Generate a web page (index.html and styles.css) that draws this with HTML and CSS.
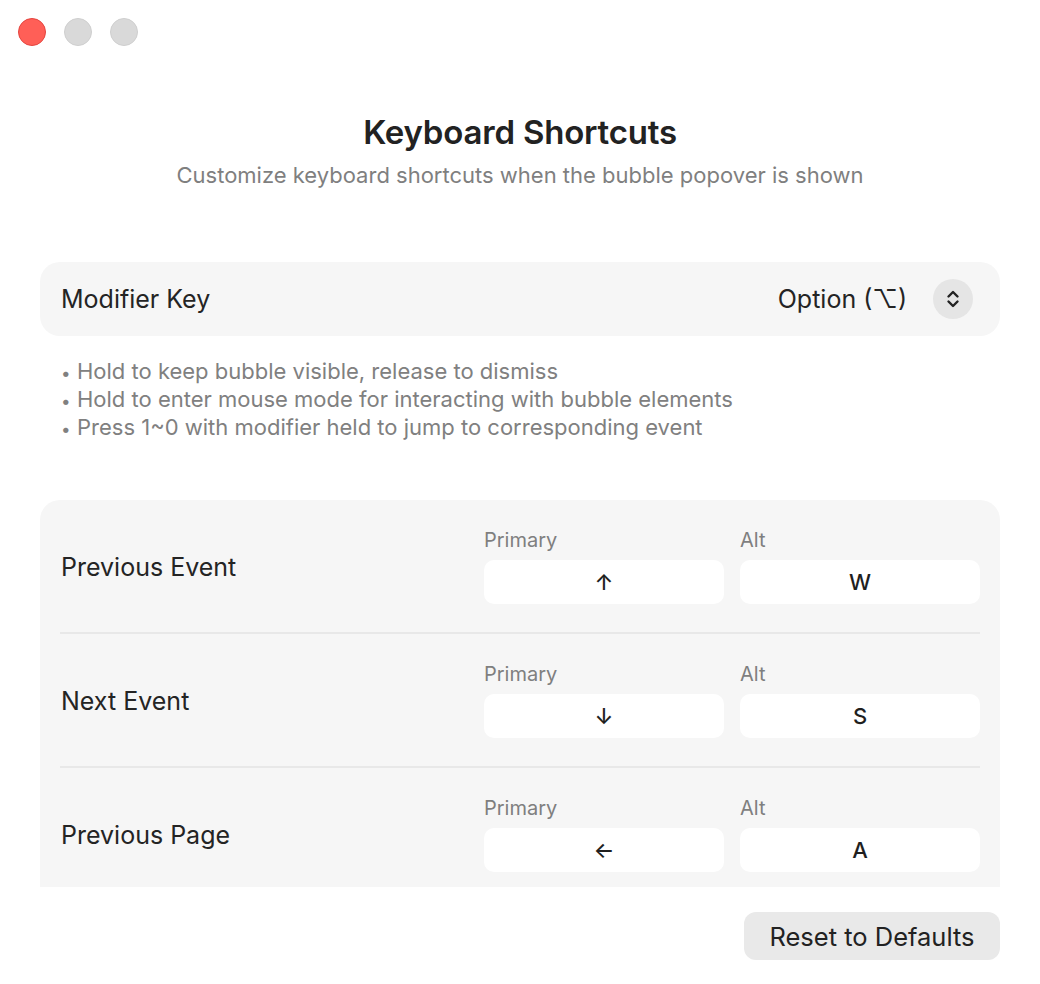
FILE: index.html
```html
<!DOCTYPE html>
<html lang="en">
<head>
<meta charset="utf-8">
<title>Keyboard Shortcuts</title>
<link rel="stylesheet" href="styles.css">
</head>
<body>
<div class="window">
  <div class="titlebar">
    <span class="light light-close"></span>
    <span class="light light-off"></span>
    <span class="light light-off"></span>
  </div>

  <header class="header">
    <h1 class="title">Keyboard Shortcuts</h1>
    <p class="subtitle">Customize keyboard shortcuts when the bubble popover is shown</p>
  </header>

  <section class="card modifier">
    <span class="row-label">Modifier Key</span>
    <div class="picker">
      <span class="picker-value">Option (⌥)</span>
      <span class="stepper">
        <svg width="14" height="20" viewBox="0 0 14 20" aria-hidden="true">
          <path d="M2.5 7.5 L7 3 L11.5 7.5" fill="none" stroke="#222" stroke-width="2.4" stroke-linecap="round" stroke-linejoin="round"/>
          <path d="M2.5 12.5 L7 17 L11.5 12.5" fill="none" stroke="#222" stroke-width="2.4" stroke-linecap="round" stroke-linejoin="round"/>
        </svg>
      </span>
    </div>
  </section>

  <ul class="notes">
    <li>Hold to keep bubble visible, release to dismiss</li>
    <li>Hold to enter mouse mode for interacting with bubble elements</li>
    <li>Press 1~0 with modifier held to jump to corresponding event</li>
  </ul>

  <section class="shortcuts">
    <div class="shortcut">
      <span class="row-label">Previous Event</span>
      <div class="bindings">
        <div class="binding"><span class="binding-label">Primary</span><span class="key">↑</span></div>
        <div class="binding"><span class="binding-label">Alt</span><span class="key">W</span></div>
      </div>
    </div>
    <div class="shortcut">
      <span class="row-label">Next Event</span>
      <div class="bindings">
        <div class="binding"><span class="binding-label">Primary</span><span class="key">↓</span></div>
        <div class="binding"><span class="binding-label">Alt</span><span class="key">S</span></div>
      </div>
    </div>
    <div class="shortcut">
      <span class="row-label">Previous Page</span>
      <div class="bindings">
        <div class="binding"><span class="binding-label">Primary</span><span class="key">←</span></div>
        <div class="binding"><span class="binding-label">Alt</span><span class="key">A</span></div>
      </div>
    </div>
  </section>

  <footer class="footer">
    <button class="reset" type="button">Reset to Defaults</button>
  </footer>
</div>
</body>
</html>
```

FILE: styles.css
```css
* {
  box-sizing: border-box;
}

html, body {
  margin: 0;
  padding: 0;
  background: #ffffff;
}

body {
  font-family: Inter, "Noto Sans", "DejaVu Sans", sans-serif;
  color: #242424;
  width: 1040px;
  height: 984px;
  overflow: hidden;
}

.window {
  display: flex;
  flex-direction: column;
  padding: 0 40px;
}

/* window controls */
.titlebar {
  display: flex;
  gap: 18px;
  padding-top: 18px;
  margin-left: -22px;
  height: 46px;
}

.light {
  width: 28px;
  height: 28px;
  border-radius: 50%;
  display: block;
}

.light-close {
  background: #ff5f57;
  border: 1px solid #e5453f;
}

.light-off {
  background: #d9d9d9;
  border: 1px solid #cfcfcf;
}

/* heading */
.header {
  text-align: center;
  margin-top: 66px;
}

.title {
  margin: 0;
  font-size: 33px;
  font-weight: 600;
  line-height: 40px;
  letter-spacing: -0.2px;
  color: #222;
}

.subtitle {
  margin: 10px 0 0;
  font-size: 22px;
  line-height: 26px;
  color: #7f7f7f;
}

/* cards */
.card {
  background: #f6f6f6;
  border-radius: 20px;
}

.modifier {
  margin-top: 74px;
  height: 74px;
  display: flex;
  align-items: center;
  justify-content: space-between;
  padding: 0 27px 0 21px;
}

.row-label {
  font-size: 25px;
  color: #242424;
}

.picker {
  display: flex;
  align-items: center;
  gap: 26px;
}

.picker-value {
  font-size: 25px;
  color: #242424;
}

.stepper {
  width: 40px;
  height: 40px;
  border-radius: 50%;
  background: #e5e5e5;
  display: flex;
  align-items: center;
  justify-content: center;
}

/* explanation list */
.notes {
  list-style: none;
  margin: 21px 0 0;
  padding: 0 0 0 21px;
  font-size: 22px;
  line-height: 28px;
  color: #808080;
}

.notes li {
  height: 28px;
}

.notes li::before {
  content: "•";
  display: inline-block;
  width: 16px;
  font-size: 17px;
  line-height: 0;
}

/* shortcut list, clipped like a scroll view */
.shortcuts {
  margin-top: 59px;
  height: 387px;
  overflow: hidden;
  background: #f6f6f6;
  border-radius: 20px 20px 0 0;
  padding: 0 20px;
}

.shortcut {
  display: flex;
  align-items: center;
  justify-content: space-between;
  padding: 29px 0 28px 1px;
  border-bottom: 2px solid #e8e8e8;
}

.bindings {
  display: flex;
  gap: 16px;
}

.binding {
  display: flex;
  flex-direction: column;
  gap: 9px;
  width: 240px;
}

.binding-label {
  font-size: 20px;
  line-height: 22px;
  color: #7f7f7f;
}

.key {
  height: 44px;
  border-radius: 10px;
  background: #ffffff;
  display: flex;
  align-items: center;
  justify-content: center;
  font-size: 22px;
  font-weight: 500;
  color: #1f1f1f;
}

/* footer */
.footer {
  display: flex;
  justify-content: flex-end;
  margin-top: 25px;
}

.reset {
  width: 256px;
  height: 48px;
  border: none;
  border-radius: 12px;
  background: #e9e9e9;
  font-family: inherit;
  font-size: 25.5px;
  color: #222;
  padding: 0;
}
```
